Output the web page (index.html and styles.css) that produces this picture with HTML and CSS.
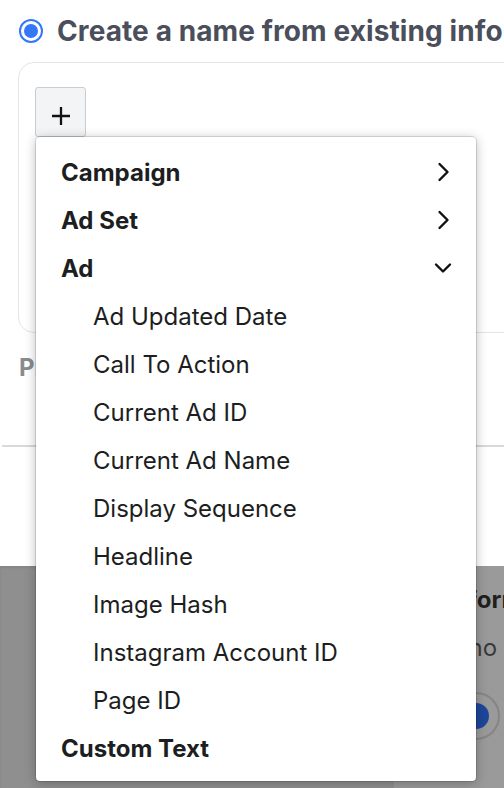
FILE: index.html
```html
<!DOCTYPE html>
<html>
<head>
<meta charset="utf-8">
<link rel="stylesheet" href="styles.css">
</head>
<body>
<div class="page">
  <div class="option">
    <span class="radio"><span class="radio-dot"></span></span>
    <span class="option-title">Create a name from existing information</span>
  </div>
  <div class="card">
    <button class="add-btn" type="button">
      <svg width="20" height="20" viewBox="0 0 20 20"><path d="M10 1v18M1 10h18" stroke="#111" stroke-width="2.3" fill="none"/></svg>
    </button>
  </div>
  <div class="preview-label">Preview</div>
  <div class="divider"></div>
  <div class="backdrop">
    <div class="modal-card">
      <div class="modal-title">Inform</div>
      <div class="modal-text">Cho</div>
      <div class="modal-radio"><span class="modal-radio-dot"></span></div>
    </div>
  </div>

  <div class="menu">
    <div class="item head"><span>Campaign</span>
      <svg class="chev" width="14" height="22" viewBox="0 0 14 22"><path d="M3.5 3l8 8-8 8" stroke="#111" stroke-width="2.4" fill="none" stroke-linecap="round" stroke-linejoin="round"/></svg>
    </div>
    <div class="item head"><span>Ad Set</span>
      <svg class="chev" width="14" height="22" viewBox="0 0 14 22"><path d="M3.5 3l8 8-8 8" stroke="#111" stroke-width="2.4" fill="none" stroke-linecap="round" stroke-linejoin="round"/></svg>
    </div>
    <div class="item head"><span>Ad</span>
      <svg class="chev down" width="18" height="12" viewBox="0 0 18 12"><path d="M2 2.5l7 7 7-7" stroke="#111" stroke-width="2.4" fill="none" stroke-linecap="round" stroke-linejoin="round"/></svg>
    </div>
    <div class="item sub">Ad Updated Date</div>
    <div class="item sub">Call To Action</div>
    <div class="item sub">Current Ad ID</div>
    <div class="item sub">Current Ad Name</div>
    <div class="item sub">Display Sequence</div>
    <div class="item sub">Headline</div>
    <div class="item sub">Image Hash</div>
    <div class="item sub">Instagram Account ID</div>
    <div class="item sub">Page ID</div>
    <div class="item head">Custom Text</div>
  </div>
</div>
</body>
</html>
```

FILE: styles.css
```css
html, body {
  margin: 0;
  padding: 0;
  background: #ffffff;
}
body {
  width: 504px;
  height: 788px;
  overflow: hidden;
  font-family: Inter, "Liberation Sans", sans-serif;
}
.page {
  position: relative;
  width: 504px;
  height: 788px;
  overflow: hidden;
}
.option {
  display: flex;
  align-items: center;
  gap: 14px;
  padding: 16px 0 0 19px;
  height: 29px;
  white-space: nowrap;
}
.radio {
  flex: none;
  width: 20px;
  height: 20px;
  border: 2px solid #3578f6;
  border-radius: 50%;
  display: flex;
  align-items: center;
  justify-content: center;
}
.radio-dot {
  width: 14px;
  height: 14px;
  border-radius: 50%;
  background: #3578f6;
}
.option-title {
  font-size: 28px;
  font-weight: 700;
  color: #4b4f5b;
  letter-spacing: 0.1px;
}
.card {
  margin: 17px 0 0 18px;
  width: 540px;
  height: 271px;
  border: 1px solid #e4e5e8;
  border-radius: 16px;
  box-sizing: border-box;
  padding: 24px 0 0 16px;
}
.add-btn {
  width: 51px;
  height: 50px;
  background: #f3f4f6;
  border: 1px solid #c9ccd1;
  border-radius: 3px;
  padding: 0;
  display: flex;
  align-items: center;
  justify-content: center;
}
.add-btn svg { margin-top: 7px; }
.preview-label {
  margin: 20px 0 0 19px;
  font-size: 24px;
  font-weight: 700;
  color: #8a8b8e;
  height: 30px;
}
.divider {
  margin: 62px 0 0 2px;
  height: 2px;
  background: #d8d8dd;
}
.backdrop {
  margin-top: 119px;
  height: 222px;
  background: #8f8f8f;
  box-shadow: inset 0 2px 3px rgba(0,0,0,0.08);
  display: flex;
  justify-content: flex-end;
}
.modal-card {
  width: 110px;
  background: #9a9a9a;
  padding-top: 19px;
  box-sizing: border-box;
}
.modal-title {
  font-size: 24px;
  font-weight: 700;
  color: #1f1f1f;
  margin-left: 52px;
  white-space: nowrap;
}
.modal-text {
  font-size: 24px;
  color: #3a3a3a;
  margin: 19px 0 0 57px;
  white-space: nowrap;
}
.modal-radio {
  margin: 30px 0 0 58px;
  width: 44px;
  height: 44px;
  border: 2px solid #858585;
  border-radius: 50%;
  display: flex;
  align-items: center;
  justify-content: center;
}
.modal-radio-dot {
  width: 26px;
  height: 26px;
  border-radius: 50%;
  background: #1d469a;
}
.menu {
  position: absolute;
  left: 36px;
  top: 137px;
  width: 440px;
  height: 644px;
  box-sizing: border-box;
  padding: 11px 0 9px;
  background: #ffffff;
  border-radius: 4px;
  box-shadow: 0 0 0 1px rgba(0,0,0,0.12), 0 2px 12px rgba(0,0,0,0.28);
}
.item {
  height: 48px;
  display: flex;
  align-items: center;
  justify-content: space-between;
  padding: 0 26px 0 25px;
  color: #1c1e21;
  font-size: 24px;
  white-space: nowrap;
}
.item.head {
  font-weight: 700;
}
.item.sub {
  padding-left: 57px;
  font-weight: 400;
}
.chev { margin-right: 0; }
.chev.down { margin-right: -2px; }
```
